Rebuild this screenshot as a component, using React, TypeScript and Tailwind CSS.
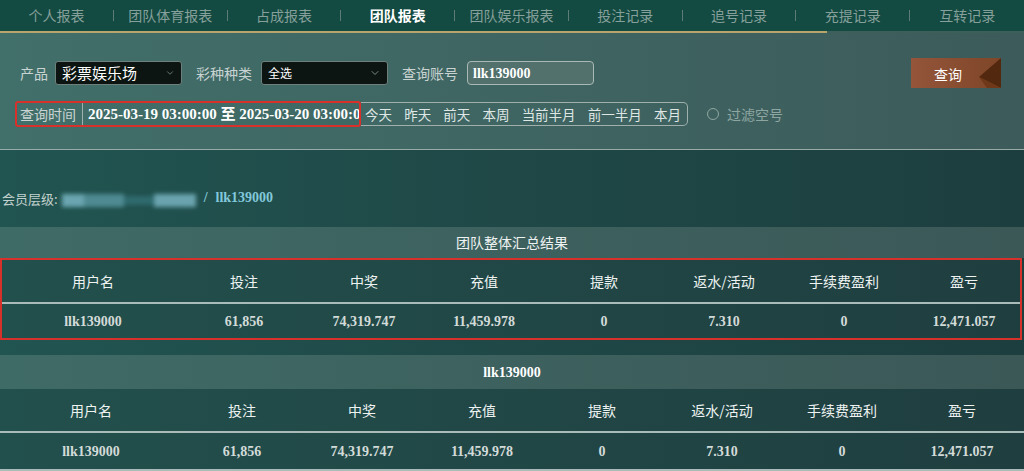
import { ChevronDown } from "lucide-react";

const navItems = [
  "个人报表",
  "团队体育报表",
  "占成报表",
  "团队报表",
  "团队娱乐报表",
  "投注记录",
  "追号记录",
  "充提记录",
  "互转记录",
];

const quickDates = ["今天", "昨天", "前天", "本周", "当前半月", "前一半月", "本月"];

const columns = ["用户名", "投注", "中奖", "充值", "提款", "返水/活动", "手续费盈利", "盈亏"];
const row = ["llk139000", "61,856", "74,319.747", "11,459.978", "0", "7.310", "0", "12,471.057"];

const cjk = { fontFamily: '"Noto Sans CJK SC", "Noto Sans", sans-serif' };

const TableCells = ({ cells, header }: { cells: string[]; header?: boolean }) => (
  <div className="flex">
    {cells.map((c, i) => (
      <div
        key={i}
        className={`${i === 0 ? "w-[182px]" : "w-[120px]"} flex items-center justify-center ${
          header
            ? "text-[14px] text-[#eef3f2]"
            : "text-[14px] font-bold text-[#d3dbd9] font-['Liberation_Serif','Noto_Sans_CJK_SC',serif]"
        }`}
      >
        {c}
      </div>
    ))}
  </div>
);

const App = () => {
  return (
    <div
      className="w-[1024px] h-[471px] overflow-hidden bg-gradient-to-r from-[#215551] via-[#1f4847] to-[#1d3e3f]"
      style={cjk}
    >
      {/* Top tabs */}
      <div className="h-[33px] bg-[#134a41] flex flex-col">
        <div className="flex-1 flex items-center">
          {navItems.map((item, i) => (
            <div key={item} className="flex-1 flex items-center h-full">
              <span
                className={`flex-1 text-center text-[14px] ${
                  item === "团队报表" ? "text-white font-bold" : "text-[#86a09b]"
                }`}
              >
                {item}
              </span>
              {i < navItems.length - 1 && <span className="w-px h-[11px] bg-[#5d7c76]" />}
            </div>
          ))}
        </div>
        <div className="flex h-[2px]">
          <div className="w-[827px] bg-[#b9a46c]" />
          <div className="flex-1 bg-[#3d5f59]" />
        </div>
      </div>

      {/* Filter panel */}
      <div className="h-[117px] bg-gradient-to-r from-[#416f6a] via-[#3f6562] to-[#3c5b5a] border-b border-[#98aba8] px-[20px] pt-[24px]">
        <div className="flex items-center h-[32px]">
          <span className="text-[14px] text-[#c9d4d2]">产品</span>
          <div className="ml-[7px] w-[127px] h-[24px] bg-[#0c1512] border border-[#6e807c] rounded-[3px] flex items-center px-[6px]">
            <span className="flex-1 text-[15px] text-white">彩票娱乐场</span>
            <ChevronDown className="w-[10px] h-[10px] text-[#7a8a86]" />
          </div>
          <span className="ml-[14px] text-[14px] text-[#c9d4d2]">彩种种类</span>
          <div className="ml-[9px] w-[127px] h-[24px] bg-[#0c1512] border border-[#6e807c] rounded-[3px] flex items-center px-[6px]">
            <span className="flex-1 text-[12px] text-white">全选</span>
            <ChevronDown className="w-[12px] h-[12px] text-[#7a8a86]" />
          </div>
          <span className="ml-[14px] text-[14px] text-[#c9d4d2]">查询账号</span>
          <div className="ml-[9px] w-[127px] h-[24px] bg-[#52716d] border border-[#a9b9b6] rounded-[4px] flex items-center px-[5px]">
            <span className="text-[14px] font-bold text-white font-['Liberation_Serif',serif]">llk139000</span>
          </div>
          <button className="ml-auto mr-[3px] relative w-[90px] h-[30px] bg-gradient-to-r from-[#94553a] to-[#7f4628] overflow-hidden">
            <svg className="absolute inset-0" width="90" height="30" viewBox="0 0 90 30">
              <polygon points="90,0 68,19 90,30" fill="#52280f" />
              <polygon points="68,19 76,30 90,30" fill="#6e3819" />
            </svg>
            <span className="relative text-[14px] text-white pr-[16px]">查询</span>
          </button>
        </div>
        <div className="flex items-center mt-[12px] -ml-[5px]">
          <div className="shrink-0 w-[346px] h-[26px] border-2 border-[#d8312b] rounded-[3px] flex items-center overflow-hidden">
            <span className="shrink-0 pl-[3px] pr-[6px] text-[14px] text-[#c9d4d2]">查询时间</span>
            <div className="h-full border-l border-[#9fb0ad] flex items-center pl-[5px] overflow-hidden whitespace-nowrap">
              <span className="text-[15px] font-bold text-white font-['Liberation_Serif','Noto_Sans_CJK_SC',serif]">
                2025-03-19 03:00:00 至 2025-03-20 03:00:00
              </span>
            </div>
          </div>
          <div className="shrink-0 h-[24px] w-[327px] border border-l-0 border-[#9fb0ad] rounded-r-[5px] flex items-center justify-between pl-[4px] pr-[6px] whitespace-nowrap">
            {quickDates.map((d) => (
              <span key={d} className="text-[13.5px] text-[#dfe7e5]">
                {d}
              </span>
            ))}
          </div>
          <span className="shrink-0 ml-[19px] w-[12px] h-[12px] rounded-full border border-[#8fa6a2]" />
          <span className="ml-[8px] text-[14px] text-[#8ea6a2]">过滤空号</span>
        </div>
      </div>

      {/* Breadcrumb */}
      <div className="h-[77px] flex items-end pb-[19px] pl-[2px]">
        <span className="text-[13px] text-[#c2d0cd]">会员层级:</span>
        <div className="ml-[4px] flex items-center h-[16px] blur-[2px]">
          <span className="w-[22px] h-[13px] bg-[#6aa5b0]" />
          <span className="w-[40px] h-[13px] bg-[#4f8a92]" />
          <span className="w-[30px] h-[9px] bg-[#2f6a6e]" />
          <span className="w-[42px] h-[13px] bg-[#6aa3ae]" />
        </div>
        <span className="ml-[8px] text-[14px] font-bold text-[#82c8da] font-['Liberation_Serif',serif]">/</span>
        <span className="ml-[8px] text-[14px] font-bold text-[#82c8da] font-['Liberation_Serif',serif]">llk139000</span>
      </div>

      {/* Team summary */}
      <div className="h-[31px] bg-gradient-to-r from-[#3f6b66] via-[#3d615e] to-[#3b5857] flex items-center justify-center">
        <span className="text-[14px] text-[#eef3f2]">团队整体汇总结果</span>
      </div>
      <div className="w-[1022px] border-2 border-[#d8312b] bg-gradient-to-r from-[#22504c] to-[#1f3e3f]">
        <div className="h-[42px] flex">
          <TableCells cells={columns} header />
        </div>
        <div className="h-[2px] bg-[#a9bcb9]" />
        <div className="h-[34px] flex">
          <TableCells cells={row} />
        </div>
      </div>

      {/* Per-user table */}
      <div className="mt-[15px] h-[34px] bg-gradient-to-r from-[#3f6b66] via-[#3d615e] to-[#3b5857] flex items-center justify-center">
        <span className="text-[14px] font-bold text-white font-['Liberation_Serif',serif]">llk139000</span>
      </div>
      <div className="bg-gradient-to-r from-[#22504c] to-[#1f3e3f]">
        <div className="h-[42px] flex">
          <TableCells cells={columns} header />
        </div>
        <div className="h-[2px] bg-[#a9bcb9]" />
        <div className="h-[36px] flex">
          <TableCells cells={row} />
        </div>
        <div className="h-[2px] bg-[#a9bcb9]" />
      </div>
    </div>
  );
};

export default App;
